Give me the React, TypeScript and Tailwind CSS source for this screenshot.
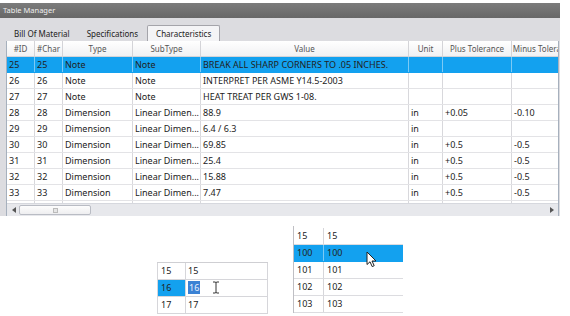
import React from "react";

const cols = ["#ID", "#Char", "Type", "SubType", "Value", "Unit", "Plus Tolerance", "Minus Tolerance"];
const widths = ["w-[28px]", "w-[28px]", "w-[70px]", "w-[68px]", "w-[208px]", "w-[34px]", "w-[69px]", "w-[64px]"];

const rows: string[][] = [
  ["25", "25", "Note", "Note", "BREAK ALL SHARP CORNERS TO .05 INCHES.", "", "", ""],
  ["26", "26", "Note", "Note", "INTERPRET PER ASME Y14.5-2003", "", "", ""],
  ["27", "27", "Note", "Note", "HEAT TREAT PER GWS 1-08.", "", "", ""],
  ["28", "28", "Dimension", "Linear Dimen...", "88.9", "in", "+0.05", "-0.10"],
  ["29", "29", "Dimension", "Linear Dimen...", "6.4 / 6.3", "in", "", ""],
  ["30", "30", "Dimension", "Linear Dimen...", "69.85", "in", "+0.5", "-0.5"],
  ["31", "31", "Dimension", "Linear Dimen...", "25.4", "in", "+0.5", "-0.5"],
  ["32", "32", "Dimension", "Linear Dimen...", "15.88", "in", "+0.5", "-0.5"],
  ["33", "33", "Dimension", "Linear Dimen...", "7.47", "in", "+0.5", "-0.5"],
  ["", "", "", "", "", "", "", ""],
];

function Arrow() {
  return (
    <svg width="12" height="17" viewBox="0 0 12 17" className="absolute left-[366px] top-[251px]">
      <path d="M1 1 L1 13.5 L4 10.8 L6.2 15.6 L8.2 14.7 L6 10 L10 10 Z" fill="#fff" stroke="#222" strokeWidth="1" strokeLinejoin="round" />
    </svg>
  );
}

function IBeam() {
  return (
    <svg width="8" height="13" viewBox="0 0 8 13" className="absolute left-[212px] top-[281px]">
      <path d="M1 1 H3 Q4 1 4 2 V11 Q4 12 3 12 H1 M7 1 H5 Q4 1 4 2 M4 11 Q4 12 5 12 H7" fill="none" stroke="#333" strokeWidth="1" />
    </svg>
  );
}

export default function App() {
  return (
    <div className="relative w-[570px] h-[316px] overflow-hidden bg-white font-['Noto_Sans',sans-serif] text-[9px] text-[#222]">
      <div className="pt-[3px]">
        <div className="w-[560px]">
          <div className="h-[15px] bg-gradient-to-b from-[#7c7c7c] to-[#676767] pl-[3px] flex items-center text-[7.5px] text-[#eeeeee]">
            Table Manager
          </div>
          <div className="h-[198px] bg-[#dcdce0] pl-[6px] pr-[1px] flex flex-col">
            <div className="h-[23px] flex items-end pl-[8px] text-[8px]">
              <div className="h-[15px] flex items-center text-[#222] mr-[17px]">Bill Of Material</div>
              <div className="h-[15px] flex items-center text-[#222] mr-[9px]">Specifications</div>
              <div className="h-[16px] flex items-center px-[8px] bg-[#f4f4f6] border border-b-0 border-[#a4a4aa] rounded-t-[2px] text-[#222]">
                Characteristics
              </div>
            </div>
            <div className="flex-1 flex flex-col bg-white border-l border-r border-[#a6b0bd] overflow-hidden">
              <div className="h-[16px] flex shrink-0 bg-gradient-to-b from-[#ffffff] to-[#f1f1f3] border-b border-[#d4d4d8] text-[#555] text-[8px]">
                {cols.map((c, i) => (
                  <div key={c} className={`${widths[i]} shrink-0 border-r border-[#d4d4d8] text-center leading-[15px] whitespace-nowrap overflow-hidden`}>
                    {c}
                  </div>
                ))}
              </div>
              <div className="h-[146px] overflow-hidden shrink-0">
                {rows.map((r, ri) => {
                  const sel = ri === 0;
                  return (
                    <div
                      key={ri}
                      className={`h-[16px] flex border-b ${sel ? "bg-[#13a1ef] border-[#13a1ef]" : "bg-white border-[#e3e3e6]"}`}
                    >
                      {r.map((v, ci) => (
                        <div
                          key={ci}
                          className={`${widths[ci]} shrink-0 border-r ${sel ? "border-[#7ccaf5]" : "border-[#d8d8dc]"} pl-[2px] leading-[15px] whitespace-nowrap overflow-hidden`}
                        >
                          {v}
                        </div>
                      ))}
                    </div>
                  );
                })}
              </div>
              <div className="h-[13px] shrink-0 bg-[#e7e8ec] border-t border-[#d6d8de] flex items-center pl-[5px] pr-[4px]">
                <svg width="4" height="6" viewBox="0 0 4 6"><path d="M4 0 L0 3 L4 6 Z" fill="#555" /></svg>
                <div className="ml-[3px] w-[72px] h-[10px] bg-gradient-to-b from-[#fdfdfd] to-[#eeeef0] border border-[#b9bcc4] rounded-[2px] flex items-center justify-center">
                  <div className="w-[5px] h-[5px] border border-[#bbb] bg-[#e6e6e6]" />
                </div>
                <div className="flex-1" />
                <svg width="4" height="6" viewBox="0 0 4 6"><path d="M0 0 L4 3 L0 6 Z" fill="#555" /></svg>
              </div>
            </div>
          </div>
        </div>
        <div className="flex items-start">
          <div className="ml-[157px] mt-[46px] w-[111px] border-t border-[#cfcfd3]">
            {[
              ["15", "15"],
              ["16", "16"],
              ["17", "17"],
            ].map((r, i) => (
              <div key={i} className="h-[17px] flex border-b border-[#d6d6da]">
                <div className={`w-[29px] shrink-0 border-l border-r border-[#d6d6da] pl-[3px] leading-[16px] ${i === 1 ? "bg-[#13a1ef]" : ""}`}>{r[0]}</div>
                <div className="flex-1 pl-[2px] leading-[16px] border-r border-[#d6d6da]">
                  {i === 1 ? (
                    <span className="bg-[#3b82d4] text-[#e8f1ff] px-[1px]">{r[1]}</span>
                  ) : (
                    r[1]
                  )}
                </div>
              </div>
            ))}
          </div>
          <div className="ml-[25px] mt-[10px] w-[110px] border-l border-[#bfbfc4] pt-[2px]">
            {[
              ["15", "15"],
              ["100", "100"],
              ["101", "101"],
              ["102", "102"],
              ["103", "103"],
            ].map((r, i) => (
              <div key={i} className={`h-[17px] flex border-b ${i === 1 ? "bg-[#13a1ef] border-[#13a1ef]" : "border-[#dcdce0]"}`}>
                <div className={`w-[30px] shrink-0 border-r ${i === 1 ? "border-[#7ccaf5]" : "border-[#d6d6da]"} pl-[3px] leading-[16px]`}>{r[0]}</div>
                <div className="flex-1 pl-[3px] leading-[16px]">{r[1]}</div>
              </div>
            ))}
          </div>
        </div>
      </div>
      <IBeam />
      <Arrow />
    </div>
  );
}
